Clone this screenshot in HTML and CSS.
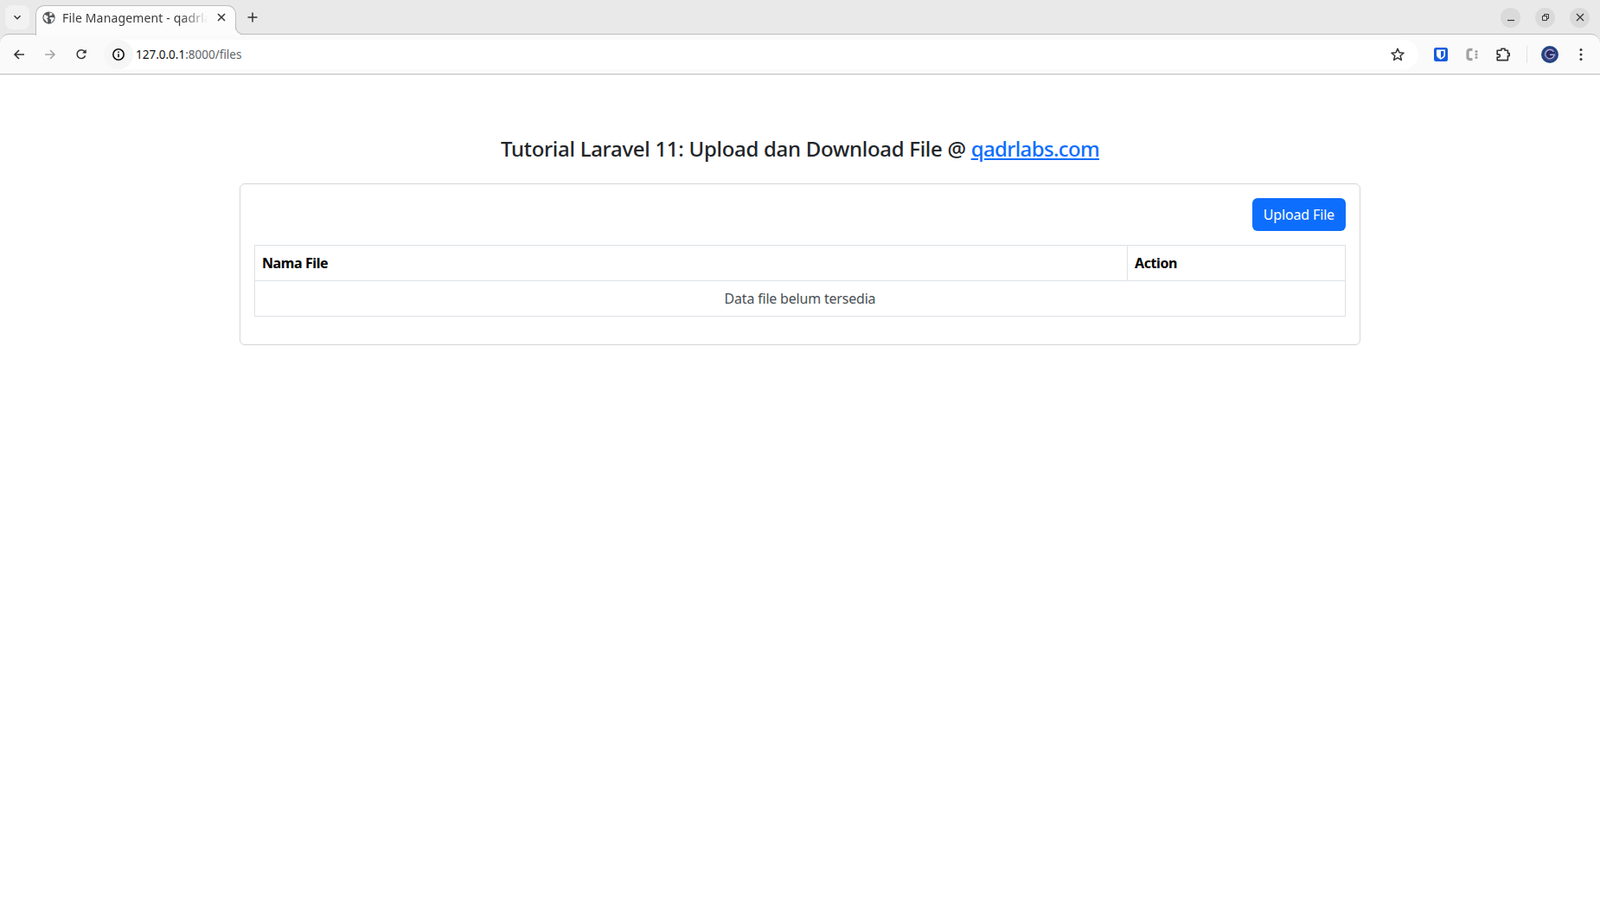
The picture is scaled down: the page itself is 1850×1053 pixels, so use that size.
FILE: index.html
```html
<!doctype html>
<html>
  <head>
    <meta charset="utf-8">
    <title>File Management - qadrlabs.com</title>
    <link rel="stylesheet" href="styles.css">
  </head>
  <body>
    <div class="browser">
      <div class="tabstrip">
        <button class="tab-search">
          <svg width="12" height="12" viewBox="0 0 12 12"><path d="M2.500 4.200 6 7.700l3.500-3.500" fill="none" stroke="#333" stroke-width="1.500"/></svg>
        </button>
        <div class="tab">
          <svg class="tab-favicon" width="15" height="15" viewBox="0 0 16 16"><circle cx="8" cy="8" r="7.600" fill="#55585c"/><path d="M2.600 4 6.800 5.800 7 7.800 5.400 9.200 6.800 10.400 6.400 14.400 3.800 11.400 1.400 8.400ZM9.200 1.400l3.600 1.600-1.400 2-2.800.6ZM9.400 7.400l5 .2.200 2-2.600 3.800-1.400.4.200-3.400-2-1.200Z" fill="#f4f4f4"/></svg>
          <span class="tab-title">File Management - qadrlabs.com</span>
          <svg class="tab-close" width="10" height="10" viewBox="0 0 10 10"><path d="M1 1l8 8M9 1 1 9" stroke="#333" stroke-width="1.500"/></svg>
        </div>
        <svg class="new-tab" width="12" height="12" viewBox="0 0 12 12"><path d="M6 .5v11M.5 6h11" stroke="#333" stroke-width="1.500"/></svg>
        <div class="window-btns">
          <span class="win-btn"><svg width="10" height="10" viewBox="0 0 10 10"><path d="M1 8.500h8" stroke="#333" stroke-width="1.200"/></svg></span>
          <span class="win-btn"><svg width="10" height="10" viewBox="0 0 10 10"><path d="M1.500 3.500h5v5h-5zM3.500 3.500v-2h5v5h-2" fill="none" stroke="#333"/></svg></span>
          <span class="win-btn"><svg width="10" height="10" viewBox="0 0 10 10"><path d="M1 1l8 8M9 1 1 9" stroke="#333" stroke-width="1.200"/></svg></span>
        </div>
      </div>
      <div class="toolbar">
        <span class="nav-btn"><svg width="14" height="14" viewBox="0 0 14 14"><path d="M13 7H2M7 2 2 7l5 5" fill="none" stroke="#333" stroke-width="1.600"/></svg></span>
        <span class="nav-btn"><svg width="14" height="14" viewBox="0 0 14 14"><path d="M1 7h11M7 2l5 5-5 5" fill="none" stroke="#a6a6a6" stroke-width="1.600"/></svg></span>
        <span class="nav-btn"><svg width="14" height="14" viewBox="0 0 14 14"><path d="M11.600 8.400A4.900 4.900 0 1 1 10.600 3.200L12.400 5" fill="none" stroke="#333" stroke-width="1.500"/><path d="M12.600 1v4.600H8z" fill="#333"/></svg></span>
        <div class="omnibox">
          <span class="omni-chip"><svg width="16" height="16" viewBox="0 0 16 16"><circle cx="8" cy="8" r="6.200" fill="none" stroke="#111" stroke-width="1.600"/><path d="M8 7.200v4M8 4.600v1.500" stroke="#111" stroke-width="1.600"/></svg></span>
          <span class="url"><span class="url-host">127.0.0.1</span>:8000/files</span>
          <svg class="omni-star" width="18" height="18" viewBox="0 0 18 18"><path d="M9 2.200l2 4.600 5 .4-3.800 3.300 1.200 4.900L9 12.800l-4.400 2.600 1.200-4.900L2 7.200l5-.4z" fill="none" stroke="#333" stroke-width="1.500" stroke-linejoin="round"/></svg>
        </div>
        <div class="extensions">
          <svg width="16" height="16" viewBox="0 0 16 16"><rect width="16" height="16" rx="2.500" fill="#175ddc"/><path d="M3 2.500h10v6c0 2.500-2.800 4.200-5 5.200-2.200-1-5-2.700-5-5.200z" fill="#fff"/><path d="M8 4h3.400v4.500c0 1.400-1.800 2.500-3.400 3.400z" fill="#175ddc"/></svg>
          <svg class="ext-c" width="16" height="16" viewBox="0 0 16 16"><path d="M8.500 2.400H5.500A2.500 2.500 0 0 0 3 4.900v6.200a2.500 2.500 0 0 0 2.500 2.500h3" fill="none" stroke="#a2a2a2" stroke-width="3.200"/><circle cx="13" cy="4.500" r="1.600" fill="#a2a2a2"/><circle cx="13" cy="8" r="1.600" fill="#a2a2a2"/><circle cx="13" cy="11.500" r="1.600" fill="#a2a2a2"/></svg>
          <svg class="ext-puzzle" width="18" height="18" viewBox="0 0 18 18"><path d="M7 2.200h4v2h3.400v3.400H16.200v3h-1.800v5H2.200v-3.500h1.600a1.500 1.500 0 0 0 0-3.200H2.200V4.200H7z" fill="none" stroke="#333" stroke-width="1.600" stroke-linejoin="round"/></svg>
          <span class="tool-sep"></span>
          <svg class="avatar" width="20" height="20" viewBox="0 0 20 20"><circle cx="10" cy="10" r="10" fill="#1d4a8c"/><circle cx="10" cy="10" r="8" fill="#2b2a62"/><circle cx="10" cy="10" r="6.800" fill="none" stroke="#5a6fb0" stroke-width=".8"/><path d="M14.400 6.800a5.200 5.200 0 1 0 .8 3.400H10" fill="none" stroke="#a3b3e0" stroke-width="1.400"/></svg>
          <svg class="tool-menu" width="4" height="16" viewBox="0 0 4 16"><circle cx="2" cy="2.500" r="1.500" fill="#333"/><circle cx="2" cy="8" r="1.500" fill="#333"/><circle cx="2" cy="13.500" r="1.500" fill="#333"/></svg>
        </div>
      </div>
    </div>

    <div class="container">
      <h3 class="page-title">Tutorial Laravel 11: Upload dan Download File @ <a href="#">qadrlabs.com</a></h3>
      <div class="card">
        <div class="card-actions">
          <a class="btn-upload" href="#">Upload File</a>
        </div>
        <table class="file-table">
          <thead>
            <tr>
              <th class="col-name">Nama File</th>
              <th>Action</th>
            </tr>
          </thead>
          <tbody>
            <tr>
              <td colspan="2" class="empty">Data file belum tersedia</td>
            </tr>
          </tbody>
        </table>
      </div>
    </div>
  </body>
</html>
```

FILE: styles.css
```css
html, body {
  margin: 0;
  padding: 0;
}
body {
  background: #fff;
  font-family: "Noto Sans", sans-serif;
  color: #212529;
}

/* browser chrome */
.browser {
  height: 87px;
  background: #e9e9e9;
  overflow: hidden;
}
.tabstrip {
  height: 40px;
  display: flex;
  align-items: center;
  position: relative;
}
.tab-search {
  width: 28px;
  height: 28px;
  margin-left: 6px;
  border: 0;
  border-radius: 8px;
  background: #f2f2f2;
  display: flex;
  align-items: center;
  justify-content: center;
  padding: 0;
}
.tab {
  position: relative;
  z-index: 1;
  box-sizing: border-box;
  width: 232px;
  height: 35px;
  align-self: flex-start;
  margin: 6px 0 0 7px;
  background: #fcfcfc;
  border: 1px solid #bdbdbd;
  border-bottom: 0;
  border-radius: 10px 10px 0 0;
  display: flex;
  align-items: center;
  padding: 0 11px 8px 7px;
  font-size: 14px;
  letter-spacing: 0.15px;
  color: #3c3c3c;
}
.tab::after {
  content: "";
  position: absolute;
  left: 100%;
  bottom: 1px;
  width: 9px;
  height: 9px;
  border-left: 1px solid #bdbdbd;
  border-bottom: 1px solid #bdbdbd;
  border-bottom-left-radius: 9px;
  box-shadow: -4px 4px 0 0 #fcfcfc;
}
.tab-favicon {
  flex: none;
  margin-right: 8px;
}
.tab-title {
  flex: 1;
  white-space: nowrap;
  overflow: hidden;
  -webkit-mask-image: linear-gradient(to right, #000 82%, transparent 100%);
  mask-image: linear-gradient(to right, #000 82%, transparent 100%);
}
.tab-close {
  flex: none;
  margin-left: 10px;
}
.new-tab {
  margin-left: 13px;
}
.window-btns {
  margin-left: auto;
  margin-right: 12px;
  display: flex;
  gap: 17px;
}
.win-btn {
  width: 23px;
  height: 23px;
  border-radius: 50%;
  background: #dadada;
  display: flex;
  align-items: center;
  justify-content: center;
}
.toolbar {
  box-sizing: border-box;
  height: 47px;
  background: #fafafa;
  border-top: 1px solid #bdbdbd;
  border-bottom: 1px solid #c8c8c8;
  border-radius: 10px 10px 0 0;
  display: flex;
  align-items: center;
  margin-top: -1px;
  padding-left: 7px;
}
.nav-btn {
  width: 30px;
  height: 30px;
  margin-right: 6px;
  display: flex;
  align-items: center;
  justify-content: center;
  flex: none;
}
.nav-btn:nth-child(3) {
  margin-right: 11px;
}
.omnibox {
  box-sizing: border-box;
  width: 1520px;
  height: 34px;
  border-radius: 17px;
  background: #fff;
  display: flex;
  align-items: center;
  padding-right: 15px;
  font-size: 13.500px;
  flex: none;
}
.omni-chip {
  box-sizing: border-box;
  width: 34px;
  height: 34px;
  border-radius: 17px;
  background: #f6f6f6;
  display: flex;
  align-items: center;
  justify-content: center;
  margin-right: 3px;
  flex: none;
}
.url {
  color: #5f6368;
  flex: 1;
}
.url-host {
  color: #111;
}
.omni-star {
  flex: none;
}
.extensions {
  flex: 1;
  display: flex;
  align-items: center;
  padding-left: 18px;
}
.ext-c {
  margin-left: 20px;
}
.ext-puzzle {
  margin-left: 19px;
}
.tool-sep {
  width: 1px;
  height: 20px;
  background: #e2e2e2;
  margin-left: 18px;
}
.avatar {
  margin-left: 16px;
}
.tool-menu {
  margin-left: 24px;
}

/* page */
.container {
  box-sizing: border-box;
  width: 1320px;
  margin: 0 auto;
  padding: 0 12px;
}
.page-title {
  margin: 67px 0 22px;
  font-size: 24px;
  font-weight: 500;
  line-height: 36px;
  letter-spacing: -0.29px;
  text-align: center;
}
.page-title a {
  color: #0d6efd;
  letter-spacing: -0.65px;
}
.card {
  box-sizing: border-box;
  height: 187px;
  border: 1px solid #d4d5d6;
  border-radius: 6px;
  padding: 16px;
}
.card-actions {
  display: flex;
  justify-content: flex-end;
  margin-bottom: 16px;
}
.btn-upload {
  box-sizing: border-box;
  height: 38px;
  padding: 7px 13px;
  background: #0d6efd;
  color: #fff;
  border-radius: 6px;
  font-size: 16px;
  line-height: 24px;
  letter-spacing: -0.15px;
  text-decoration: none;
}
.file-table {
  width: 100%;
  table-layout: fixed;
  border-collapse: collapse;
  font-size: 16px;
}
.file-table th,
.file-table td {
  border: 1px solid #dee2e6;
  padding: 8px;
  height: 24px;
  line-height: 24px;
  text-align: left;
}
.file-table th {
  color: #000;
  font-weight: 700;
  letter-spacing: -0.4px;
}
.col-name {
  box-sizing: border-box;
  width: 1009px;
}
.file-table td.empty {
  text-align: center;
  color: #4a4f54;
  letter-spacing: -0.2px;
}
```
